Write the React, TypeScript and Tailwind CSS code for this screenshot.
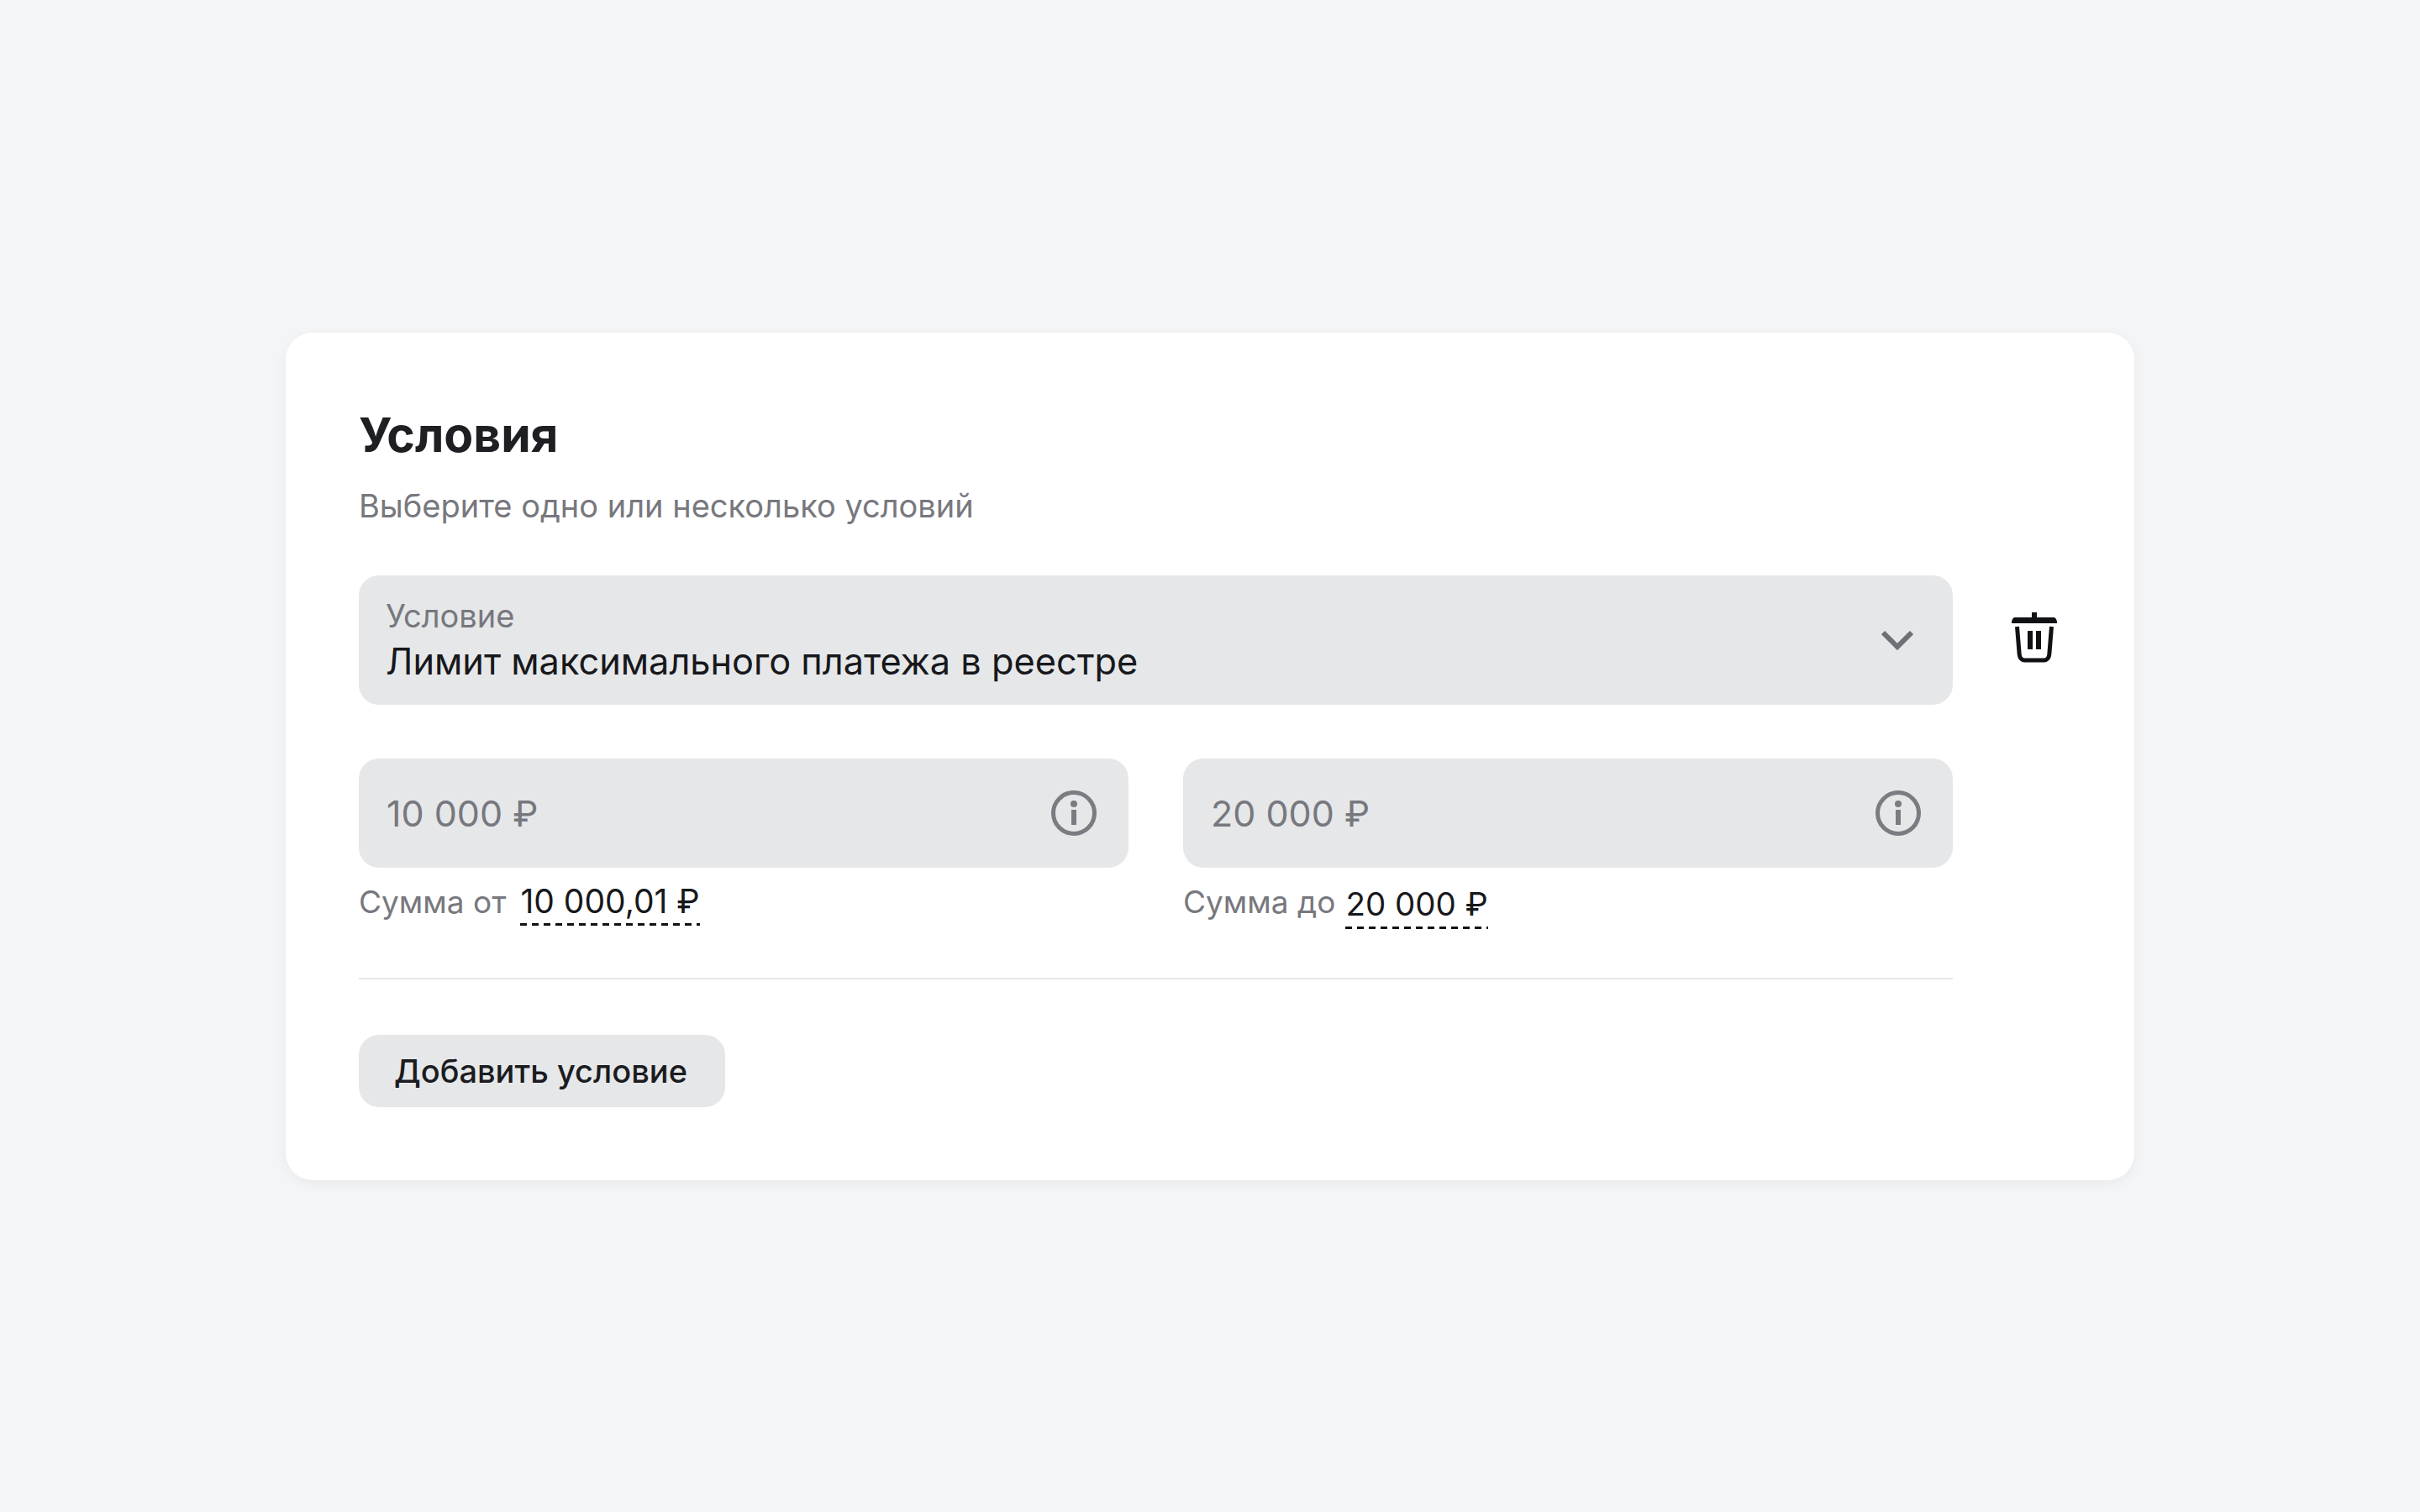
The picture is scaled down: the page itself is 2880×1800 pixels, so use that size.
import React from "react";

const TrashIcon = () => (
  <svg viewBox="0 0 60 60" className="w-[60px] h-[60px]" fill="none">
    <rect x="27" y="0" width="6" height="8" fill="#101114" />
    <path d="M3 12.5C3 8.500 5 6 7 6h46c2 0 4 2.500 4 6.500v.5H3z" fill="#101114" />
    <path
      d="M9.500 17l2.700 33c.3 4 2.900 7 6.400 7h22.800c3.500 0 6.100-3 6.400-7l2.700-33"
      stroke="#101114"
      strokeWidth="5"
    />
    <rect x="22" y="22" width="6" height="22" fill="#101114" />
    <rect x="32" y="22" width="6" height="22" fill="#101114" />
  </svg>
);

const InfoIcon = () => (
  <svg viewBox="0 0 54 54" className="w-[54px] h-[54px]" fill="none">
    <circle cx="27" cy="27" r="24.500" stroke="#7b7c82" strokeWidth="5" />
    <circle cx="27" cy="16" r="4" fill="#7b7c82" />
    <rect x="24" y="23" width="6" height="18" fill="#7b7c82" />
  </svg>
);

const ChevronIcon = () => (
  <svg viewBox="0 0 38 24" className="w-[38px] h-[24px]" fill="none">
    <path d="M2 3l17 17L36 3" stroke="#6f7076" strokeWidth="6" />
  </svg>
);

interface AmountFieldProps {
  placeholder: string;
  label: string;
  value: string;
  valueClass: string;
}

const AmountField: React.FC<AmountFieldProps> = ({ placeholder, label, value, valueClass }) => (
  <div className="flex-1">
    <div className="h-[130px] bg-[#e6e7e9] rounded-[24px] pl-[33px] pr-[38px] flex items-center justify-between">
      <span className="text-[43px] text-[#77787e]">{placeholder}</span>
      <InfoIcon />
    </div>
    <div className="mt-[13px] h-[56px] flex items-start">
      <span className="text-[37px] leading-[56px] text-[#77787e]">{label}</span>
      <div className={`text-[#17181b] ${valueClass}`}>
        {value}
        <div className="h-[3px] bg-[repeating-linear-gradient(90deg,#101114_0_8px,transparent_8px_14px)]" />
      </div>
    </div>
  </div>
);

export default function App() {
  return (
    <div
      className="min-h-[1800px] bg-[#f4f5f7] flex justify-center items-start pt-[396px]"
      style={{ fontFamily: "Inter, sans-serif" }}
    >
      <div className="w-[2200px] h-[1009px] bg-white rounded-[32px] shadow-[0_4px_16px_rgba(0,0,0,0.05)] pl-[87px] pt-[88px]">
        <h1 className="text-[57px] leading-[68px] font-bold text-[#1e1f22]">Условия</h1>
        <p className="mt-[23px] text-[38px] leading-[54px] text-[#77787e]">Выберите одно или несколько условий</p>

        <div className="mt-[56px] flex items-start">
          <div className="w-[1897px] h-[154px] bg-[#e6e7e9] rounded-[24px] pl-[32px] pr-[47px] flex items-center justify-between">
            <div>
              <div className="text-[38px] leading-[50px] text-[#77787e]">Условие</div>
              <div className="text-[43.3px] leading-[58px] text-[#17181b]">Лимит максимального платежа в реестре</div>
            </div>
            <ChevronIcon />
          </div>
          <div className="ml-[67px] mt-[44px]">
            <TrashIcon />
          </div>
        </div>

        <div className="w-[1897px] mt-[64px] flex gap-[65px]">
          <AmountField placeholder="10 000 ₽" label="Сумма от" value="10 000,01 ₽" valueClass="ml-[17px] text-[39px] leading-[53px]" />
          <AmountField placeholder="20 000 ₽" label="Сумма до" value="20 000 ₽" valueClass="ml-[12px] text-[38.500px] leading-[54px] mt-[3px]" />
        </div>

        <div className="w-[1897px] mt-[62px] h-[2px] bg-[#e8e9eb]" />

        <button className="mt-[66px] w-[436px] h-[86px] bg-[#e6e7e9] rounded-[24px] text-[38px] font-medium text-[#1b1c1f] text-left pl-[42px]">
          Добавить условие
        </button>
      </div>
    </div>
  );
}
